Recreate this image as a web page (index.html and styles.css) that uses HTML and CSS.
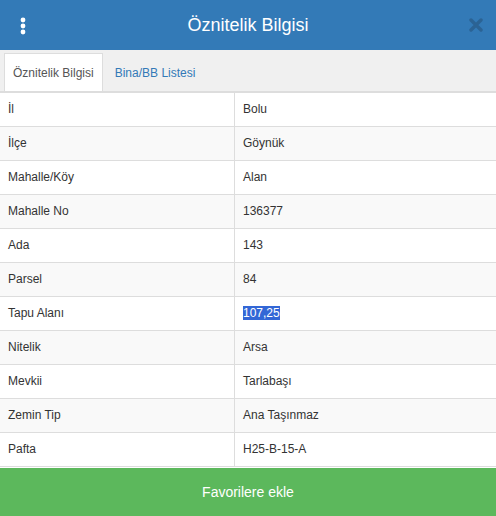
FILE: index.html
```html
<!DOCTYPE html>
<html lang="tr">
    <head>
        <meta charset="utf-8">
        <title>Öznitelik Bilgisi</title>
        <link rel="stylesheet" href="styles.css">
    </head>
    <body>
        <div class="panel">
            <div class="header">
                <span class="menu">
                    <svg width="6" height="18" viewBox="0 0 6 18">
                        <circle cx="3" cy="3" r="2.4" fill="#fff"/>
                        <circle cx="3" cy="9" r="2.4" fill="#fff"/>
                        <circle cx="3" cy="15" r="2.4" fill="#fff"/>
                    </svg>
                </span>
                <h1>Öznitelik Bilgisi</h1>
                <span class="close">
                    <svg width="14" height="14" viewBox="0 0 14 14">
                        <path d="M2 2 L12 12 M12 2 L2 12" stroke="#2a5f8f" stroke-width="3.4" stroke-linecap="round"/>
                    </svg>
                </span>
            </div>
            <ul class="tabs">
                <li class="active">Öznitelik Bilgisi</li>
                <li>Bina/BB Listesi</li>
            </ul>
            <table class="attrs">
                <tr><td>İl</td><td>Bolu</td></tr>
                <tr><td>İlçe</td><td>Göynük</td></tr>
                <tr><td>Mahalle/Köy</td><td>Alan</td></tr>
                <tr><td>Mahalle No</td><td>136377</td></tr>
                <tr><td>Ada</td><td>143</td></tr>
                <tr><td>Parsel</td><td>84</td></tr>
                <tr><td>Tapu Alanı</td><td><span class="selected">107,25</span></td></tr>
                <tr><td>Nitelik</td><td>Arsa</td></tr>
                <tr><td>Mevkii</td><td>Tarlabaşı</td></tr>
                <tr><td>Zemin Tip</td><td>Ana Taşınmaz</td></tr>
                <tr><td>Pafta</td><td>H25-B-15-A</td></tr>
            </table>
            <button class="fav">Favorilere ekle</button>
        </div>
    </body>
</html>
```

FILE: styles.css
```css
html, body {
    margin: 0;
    padding: 0;
}

body {
    font-family: "Liberation Sans", Arial, sans-serif;
    font-size: 12px;
    color: #333;
    background: #fff;
}

.panel {
    width: 496px;
    height: 516px;
    display: flex;
    flex-direction: column;
}

.header {
    height: 50px;
    background: #337ab7;
    display: grid;
    grid-template-columns: 1fr auto 1fr;
    align-items: center;
    padding: 0 16px;
}

.header h1 {
    margin: 0;
    font-size: 18px;
    font-weight: normal;
    color: #fff;
}

.menu, .close {
    display: flex;
}

.menu {
    padding: 1px 0 0 4px;
}

.close {
    justify-content: flex-end;
    margin-right: -3px;
    opacity: 0.85;
}

.tabs {
    list-style: none;
    margin: 0;
    padding: 3px 4px 0;
    background: #f0f0f0;
    border-bottom: 2px solid #ddd;
    display: flex;
}

.tabs li {
    padding: 11px 8px 9px;
    line-height: 17px;
    color: #337ab7;
    border: 1px solid transparent;
    border-bottom: 0;
}

.tabs li + li {
    margin-left: 3px;
}

.tabs li.active {
    background: #fff;
    color: #555;
    border-color: #ddd;
}

.attrs {
    width: 100%;
    border-collapse: collapse;
    table-layout: fixed;
}

.attrs td {
    padding: 8px;
    line-height: 17px;
    border-bottom: 1px solid #ddd;
}

.attrs td:first-child {
    width: 218px;
    border-right: 1px solid #ddd;
}

.attrs tr:nth-child(even) td {
    background: #f9f9f9;
}

.selected {
    background: #3367d6;
    color: #fff;
}

.fav {
    margin-top: auto;
    height: 48px;
    border: 0;
    background: #5cb85c;
    color: #fff;
    font-family: "Liberation Sans", Arial, sans-serif;
    font-size: 14px;
}
```
